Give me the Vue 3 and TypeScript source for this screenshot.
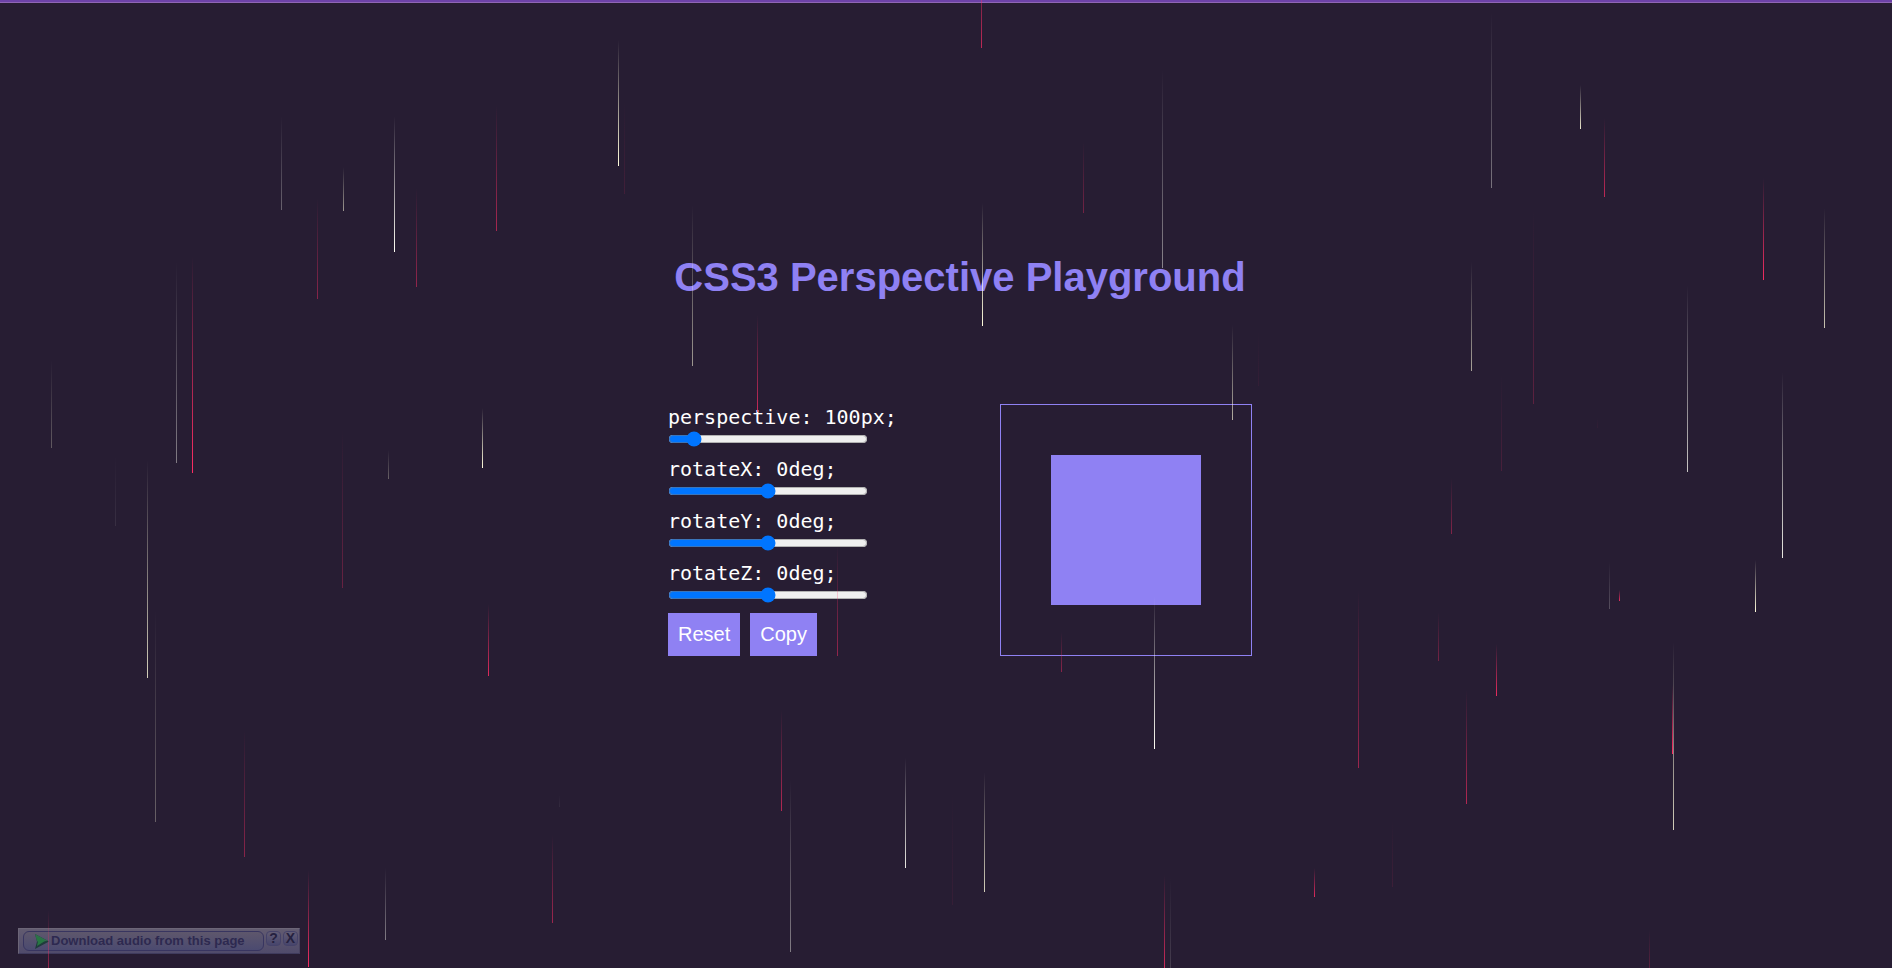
<script setup lang="ts">
import { computed, reactive } from 'vue'

type Tint = 'cream' | 'white' | 'pink'
type Drop = [x: number, top: number, bottom: number, tint: Tint, strength: number]

interface Control {
  key: 'perspective' | 'rotateX' | 'rotateY' | 'rotateZ'
  unit: string
  min: number
  max: number
}

const controls: Control[] = [
  { key: 'perspective', unit: 'px', min: 0, max: 1000 },
  { key: 'rotateX', unit: 'deg', min: -180, max: 180 },
  { key: 'rotateY', unit: 'deg', min: -180, max: 180 },
  { key: 'rotateZ', unit: 'deg', min: -180, max: 180 },
]

const defaults = { perspective: 100, rotateX: 0, rotateY: 0, rotateZ: 0 }
const values = reactive({ ...defaults })

const transform = computed(
  () =>
    `perspective(${values.perspective}px) rotateX(${values.rotateX}deg) rotateY(${values.rotateY}deg) rotateZ(${values.rotateZ}deg)`,
)
const turned = computed(() => Boolean(+values.rotateX || +values.rotateY || +values.rotateZ))

function reset() {
  Object.assign(values, defaults)
}

function copy() {
  navigator.clipboard?.writeText(`transform: ${transform.value};`)
}

const tints: Record<Tint, string> = {
  cream: '255, 252, 220',
  white: '255, 255, 245',
  pink: '255, 45, 100',
}

const drops: Drop[] = [
  [281, 116, 210, 'white', 0.3],
  [317, 198, 299, 'pink', 0.45],
  [343, 167, 211, 'cream', 0.55],
  [394, 116, 252, 'white', 1],
  [416, 188, 287, 'pink', 0.5],
  [496, 105, 231, 'pink', 0.6],
  [618, 40, 166, 'cream', 1],
  [624, 100, 194, 'pink', 0.12],
  [176, 262, 463, 'white', 0.42],
  [192, 256, 473, 'pink', 1],
  [51, 360, 448, 'cream', 0.27],
  [115, 455, 526, 'white', 0.08],
  [147, 460, 678, 'cream', 0.8],
  [155, 610, 822, 'cream', 0.3],
  [342, 430, 588, 'pink', 0.3],
  [388, 450, 479, 'cream', 0.3],
  [482, 408, 468, 'cream', 1],
  [488, 604, 676, 'pink', 0.85],
  [244, 730, 857, 'pink', 0.45],
  [559, 795, 807, 'white', 0.06],
  [552, 835, 923, 'pink', 0.55],
  [385, 868, 940, 'white', 0.42],
  [308, 870, 967, 'pink', 0.95],
  [48, 910, 1010, 'pink', 0.85],
  [781, 710, 811, 'pink', 0.65],
  [790, 780, 952, 'white', 0.42],
  [905, 758, 868, 'white', 0.9],
  [952, 790, 905, 'pink', 0.07],
  [984, 772, 892, 'cream', 0.8],
  [1154, 596, 749, 'white', 1],
  [1061, 632, 672, 'pink', 0.45],
  [1164, 875, 985, 'pink', 0.9],
  [1170, 878, 1040, 'white', 0.25],
  [837, 545, 656, 'pink', 0.5],
  [981, -60, 48, 'pink', 0.7],
  [692, 205, 366, 'cream', 0.55],
  [982, 203, 326, 'cream', 1],
  [1083, 142, 213, 'pink', 0.35],
  [1162, 70, 268, 'white', 0.45],
  [757, 315, 412, 'pink', 0.75],
  [1232, 325, 420, 'cream', 0.65],
  [1258, 330, 386, 'pink', 0.06],
  [1491, 12, 188, 'white', 0.38],
  [1580, 85, 129, 'cream', 0.9],
  [1604, 118, 197, 'pink', 0.7],
  [1763, 178, 280, 'pink', 0.95],
  [1824, 208, 328, 'cream', 0.75],
  [1471, 262, 371, 'cream', 0.6],
  [1533, 210, 404, 'pink', 0.25],
  [1687, 285, 472, 'white', 0.75],
  [1501, 375, 471, 'pink', 0.16],
  [1597, 418, 428, 'pink', 0.05],
  [1451, 478, 534, 'pink', 0.42],
  [1782, 372, 558, 'white', 0.9],
  [1755, 560, 612, 'cream', 1],
  [1609, 562, 609, 'white', 0.22],
  [1619, 590, 601, 'pink', 0.9],
  [1358, 590, 768, 'pink', 0.55],
  [1438, 612, 661, 'pink', 0.37],
  [1496, 644, 696, 'pink', 0.9],
  [1673, 642, 830, 'cream', 0.8],
  [1672, 685, 754, 'pink', 1],
  [1466, 690, 804, 'pink', 0.65],
  [1392, 820, 887, 'pink', 0.1],
  [1314, 868, 897, 'pink', 0.85],
  [1649, 930, 1030, 'pink', 0.6],
]

function dropStyle([x, top, bottom, tint, strength]: Drop) {
  const rgb = tints[tint]
  return {
    left: `${x}px`,
    top: `${top}px`,
    height: `${bottom - top}px`,
    background: `linear-gradient(rgba(${rgb}, 0), rgba(${rgb}, ${strength}))`,
  }
}
</script>

<template>
  <div class="page">
    <main class="playground">
      <h1>CSS3 Perspective Playground</h1>
      <div class="workspace">
        <form class="controls" @submit.prevent>
          <div v-for="c in controls" :key="c.key" class="control">
            <label :for="c.key">{{ c.key }}: {{ values[c.key] }}{{ c.unit }};</label>
            <input :id="c.key" v-model="values[c.key]" type="range" :min="c.min" :max="c.max" />
          </div>
          <div class="actions">
            <button type="button" @click="reset">Reset</button>
            <button type="button" @click="copy">Copy</button>
          </div>
        </form>
        <div class="preview">
          <div class="box" :style="turned ? { transform } : undefined"></div>
        </div>
      </div>
    </main>

    <div class="downloader">
      <button type="button" class="download">
        <svg class="arrow" viewBox="0 0 15 15" aria-hidden="true">
          <path d="M1 0 15 7.5 1 15 3 7.5Z" fill="#1f3b3c" />
          <path d="M1 0 14 7 3 7.5Z" fill="#2f6f4c" />
          <path d="M2 2 11 7 3 12 4 7Z" fill="#277742" />
        </svg>
        <span>Download audio from this page</span>
      </button>
      <button type="button" class="mini">?</button>
      <button type="button" class="mini">X</button>
    </div>

    <div class="rain" aria-hidden="true">
      <i v-for="(drop, i) in drops" :key="i" class="drop" :style="dropStyle(drop)"></i>
    </div>
  </div>
</template>

<style>
body {
  margin: 0;
  background: #271d33;
}
</style>

<style scoped>
.page {
  position: relative;
  box-sizing: border-box;
  min-height: 100vh;
  padding: 0 0 58px 28px;
  overflow: hidden;
  display: flex;
  flex-direction: column;
  align-items: center;
  justify-content: center;
  background: #271d33;
  font-family: "Liberation Sans", Arial, sans-serif;
}

.page::before {
  content: "";
  position: absolute;
  inset: 0 0 auto;
  height: 2px;
  background: #6d42a8;
  border-bottom: 1px solid #8f66b5;
}

.playground {
  display: flex;
  flex-direction: column;
  gap: 104px;
}

h1 {
  margin: 0;
  color: #8f81f3;
  font-size: 40px;
  line-height: 46px;
  text-align: center;
}

.workspace {
  display: flex;
  justify-content: space-between;
  gap: 104px;
}

.controls {
  width: 228px;
  display: flex;
  flex-direction: column;
  gap: 9px;
}

.control {
  display: flex;
  flex-direction: column;
}

label {
  color: #fff;
  font-family: Consolas, "DejaVu Sans Mono", monospace;
  font-size: 20px;
  line-height: 27px;
  white-space: nowrap;
}

input {
  width: 200px;
  height: 16px;
  margin: 0;
}

.actions {
  display: flex;
  gap: 10px;
  margin-top: auto;
}

.actions button {
  padding: 10px;
  border: 0;
  background: #8f81f3;
  color: #fff;
  font: 20px/23px "Liberation Sans", Arial, sans-serif;
}

.preview {
  padding: 50px;
  border: 1px solid #8f81f3;
}

.box {
  width: 150px;
  height: 150px;
  background: #8f81f3;
}

.downloader {
  position: absolute;
  left: 18px;
  bottom: 14px;
  box-sizing: border-box;
  width: 282px;
  height: 26px;
  padding: 2px 1px 2px 4px;
  display: flex;
  align-items: flex-start;
  gap: 2px;
  border: 1px solid;
  border-color: #6c6577 #484260 #3f3b5d #6c6577;
  background: linear-gradient(#625b70, #504b6b);
}

.download {
  box-sizing: border-box;
  height: 20px;
  flex: 1;
  padding: 0 0 0 10px;
  display: flex;
  align-items: center;
  gap: 2px;
  border: 1px solid #383560;
  border-radius: 6px;
  background: linear-gradient(#5e576c, #4b4a70);
  color: #2d2950;
  font: bold 13px/18px "Liberation Sans", Arial, sans-serif;
  white-space: nowrap;
}

.arrow {
  flex: none;
  width: 15px;
  height: 15px;
}

.mini {
  box-sizing: border-box;
  width: 15px;
  height: 15px;
  padding: 0;
  border: 1px solid #454269;
  border-radius: 4px;
  background: linear-gradient(#625c74, #47456c);
  color: #25213f;
  font: bold 14px/13px "Liberation Sans", Arial, sans-serif;
}

.rain {
  position: absolute;
  inset: 0;
  overflow: hidden;
  pointer-events: none;
}

.drop {
  position: absolute;
  width: 1px;
}
</style>
